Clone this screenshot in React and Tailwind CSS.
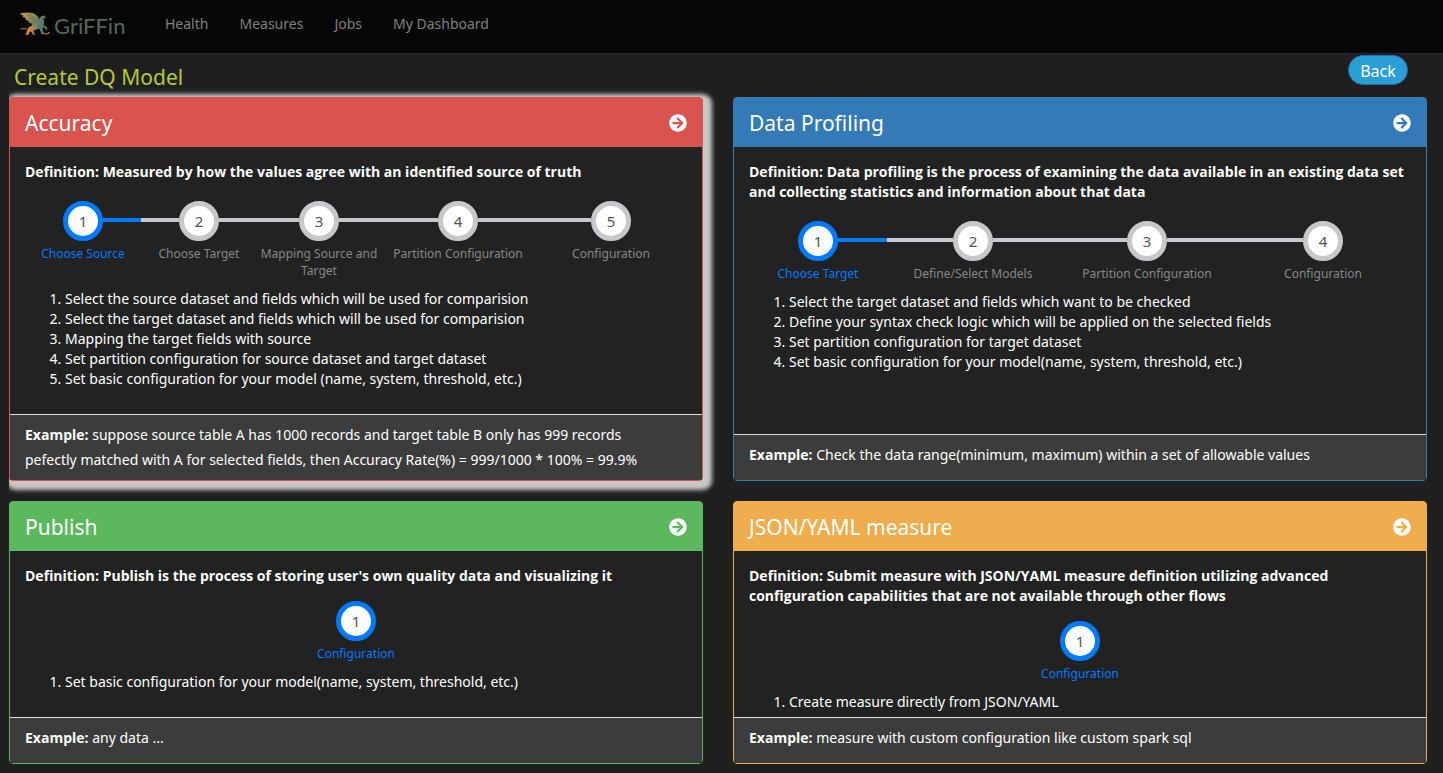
import { FaArrowCircleRight } from "react-icons/fa"

const navLinks = ["Health", "Measures", "Jobs", "My Dashboard"]

const models = [
  {
    title: "Accuracy",
    header: "bg-[#d9534f]",
    border: "border-[#d9534f]",
    card: "shadow-[3px_3px_4px_6px_#c8c8c8] [clip-path:inset(-16px_-16px_-16px_0)]",
    definition: "Measured by how the values agree with an identified source of truth",
    steps: ["Choose Source", "Choose Target", "Mapping Source and Target", "Partition Configuration", "Configuration"],
    columns: "mt-[19px] grid-cols-[116fr_116fr_124fr_154fr_152fr]",
    items: [
      "Select the source dataset and fields which will be used for comparision",
      "Select the target dataset and fields which will be used for comparision",
      "Mapping the target fields with source",
      "Set partition configuration for source dataset and target dataset",
      "Set basic configuration for your model (name, system, threshold, etc.)",
    ],
    list: "pb-[25px]",
    example:
      "suppose source table A has 1000 records and target table B only has 999 records pefectly matched with A for selected fields, then Accuracy Rate(%) = 999/1000 * 100% = 99.9%",
  },
  {
    title: "Data Profiling",
    header: "bg-[#337ab7]",
    border: "border-[#337ab7]",
    card: "",
    definition:
      "Data profiling is the process of examining the data available in an existing data set and collecting statistics and information about that data",
    steps: ["Choose Target", "Define/Select Models", "Partition Configuration", "Configuration"],
    columns: "mt-[19px] grid-cols-[138fr_172fr_176fr_176fr]",
    items: [
      "Select the target dataset and fields which want to be checked",
      "Define your syntax check logic which will be applied on the selected fields",
      "Set partition configuration for target dataset",
      "Set basic configuration for your model(name, system, threshold, etc.)",
    ],
    list: "pb-[5px]",
    example: "Check the data range(minimum, maximum) within a set of allowable values",
  },
  {
    title: "Publish",
    header: "bg-[#5cb85c]",
    border: "border-[#5cb85c]",
    card: "",
    definition: "Publish is the process of storing user's own quality data and visualizing it",
    steps: ["Configuration"],
    columns: "mt-[15px] grid-cols-1",
    items: ["Set basic configuration for your model(name, system, threshold, etc.)"],
    list: "pb-[5px]",
    example: "any data ...",
  },
  {
    title: "JSON/YAML measure",
    header: "bg-[#f0ad4e]",
    border: "border-[#f0ad4e]",
    card: "",
    definition:
      "Submit measure with JSON/YAML measure definition utilizing advanced configuration capabilities that are not available through other flows",
    steps: ["Configuration"],
    columns: "mt-[15px] grid-cols-1",
    items: ["Create measure directly from JSON/YAML"],
    list: "pb-[5px]",
    example: "measure with custom configuration like custom spark sql",
  },
]

function Logo() {
  return (
    <a href="#" className="flex w-[106px] items-end gap-1" aria-label="Griffin home">
      <svg className="w-[30px] h-6" viewBox="0 0 30 24" fill="none">
        <defs>
          <linearGradient id="wing" x1="0" y1="0" x2="1" y2="0.6">
            <stop offset="0" stopColor="#d8963f" />
            <stop offset="0.5" stopColor="#9a8a58" />
            <stop offset="1" stopColor="#5d7a6c" />
          </linearGradient>
          <linearGradient id="body" x1="0" y1="0" x2="1" y2="0">
            <stop offset="0.2" stopColor="#d38a35" />
            <stop offset="0.6" stopColor="#5d7a6c" />
          </linearGradient>
        </defs>
        <path
          d="M0 1.5C4 .5 9 0 12.500 1 17 2.500 20 6 20 11l-3 5c-3-.5-4.500-2-5.500-4l1-.5c-2 0-3.500-.6-4.500-2l1.500-.2C7 8.500 5.500 7.800 4.500 6.500l1.800-.2C4 5.800 2.800 5 2 3.800l2 0C2 3.300.8 2.500 0 1.500Z"
          fill="url(#wing)"
        />
        <path d="M7 3c4 .2 7 2 9 5M9 6c3 .4 5 2 6.500 4" stroke="#4a4a38" strokeWidth="0.4" />
        <path
          d="M19 9c.3-3 1.500-5 4-5.500l1.500.5 1.500 2-2.500.2c.8 3 .8 5 0 7l3 1.500 1 3-1.500.2-1-2-2.500-.5.5 4.800 2.500 1v1H21.500l-2-5.500-4 1-2 1 1 3 1.500 1h-3l-2-3.500-1.500 1-1 2.500H5.500l1.500-4c.5-3 3-5 6-5.500 2.500 0 4.500-1.500 6-3.200Z"
          fill="url(#body)"
        />
        <path d="M7 17.500c-1.500-2-2.500-.5-4-.8-1-.2-1.500.5-2.500.6" stroke="#b87c38" strokeWidth="1" />
        <path d="M25 22l3-.5 1.500-1" stroke="#d38a35" strokeWidth="1.200" />
      </svg>
      <span className="text-[22px] leading-5 text-[#56665e] font-['Lato',sans-serif]">GriFFin</span>
    </a>
  )
}

function Steps({ steps, columns }) {
  return (
    <ol className={`grid ${columns}`}>
      {steps.map((label, i) => (
        <li key={label} className="flex flex-col items-center">
          <div className="flex items-center self-stretch">
            <span className={`h-1 mb-0.5 flex-1 ${i > 0 ? "bg-[#c8c7cc]" : ""}`}></span>
            <span
              className={`w-10 h-10 rounded-full border-[5px] bg-white text-[#555] text-[15px] flex items-center justify-center ${
                i === 0 ? "border-[#007aff]" : "border-[#c8c7cc]"
              }`}
            >
              {i + 1}
            </span>
            <span
              className={`h-1 mb-0.5 flex-1 ${i === steps.length - 1 ? "" : i === 0 ? "bg-[#007aff]" : "bg-[#c8c7cc]"}`}
            ></span>
          </div>
          <span
            className={`mt-1 text-xs leading-[17px] text-center ${i === 0 ? "text-[#007aff]" : "text-[#878787]"}`}
          >
            {label}
          </span>
        </li>
      ))}
    </ol>
  )
}

function ModelCard({ model }) {
  return (
    <section className={`flex flex-col rounded-sm border bg-[#222] ${model.border} ${model.card}`}>
      <header className={`flex items-center justify-between h-[49px] px-[15px] ${model.header}`}>
        <h2 className="text-[21px]">{model.title}</h2>
        <button type="button" aria-label={`Create ${model.title}`}>
          <FaArrowCircleRight className="w-[18px] h-[18px]" />
        </button>
      </header>
      <div className="flex-1 px-[15px] pt-[15px]">
        <p className="font-bold font-['Open_Sans',sans-serif]">{`Definition: ${model.definition}`}</p>
        <Steps steps={model.steps} columns={model.columns} />
        <ol className={`list-decimal pl-10 mt-2.5 ${model.list}`}>
          {model.items.map((item) => (
            <li key={item}>{item}</li>
          ))}
        </ol>
      </div>
      <footer className="min-h-[46px] pl-[15px] pr-8 pt-[7px] pb-2 border-t border-[#ddd] bg-[#3c3c3c] leading-[25px]">
        <b className="font-['Open_Sans',sans-serif]">Example:</b> {model.example}
      </footer>
    </section>
  )
}

export default function App() {
  return (
    <div className="min-h-screen bg-[#1f1f1f] text-white text-sm leading-5 font-['Noto_Sans','Open_Sans',sans-serif]">
      <nav className="flex h-[54px] pb-1.5 items-center pl-5 bg-[#060606] border-b border-[#282828]">
        <Logo />
        <ul className="flex ml-[39px] gap-[31px] text-[#808080]">
          {navLinks.map((link) => (
            <li key={link}>
              <a href="#">{link}</a>
            </li>
          ))}
        </ul>
      </nav>
      <div className="flex items-start justify-between h-[43px] pl-3.5 pr-[35px]">
        <h1 className="mt-2 text-[21px] leading-[30px] text-[#b2cc34]">Create DQ Model</h1>
        <button
          type="button"
          className="mt-px h-[30px] w-[60px] pt-0.5 rounded-full border border-[#2a6fa8] bg-[#2a9fd6] text-base"
        >
          Back
        </button>
      </div>
      <main className="grid grid-cols-2 gap-x-[30px] gap-y-5 pl-[9px] pr-4 pb-[9px]">
        {models.map((model) => (
          <ModelCard key={model.title} model={model} />
        ))}
      </main>
    </div>
  )
}
